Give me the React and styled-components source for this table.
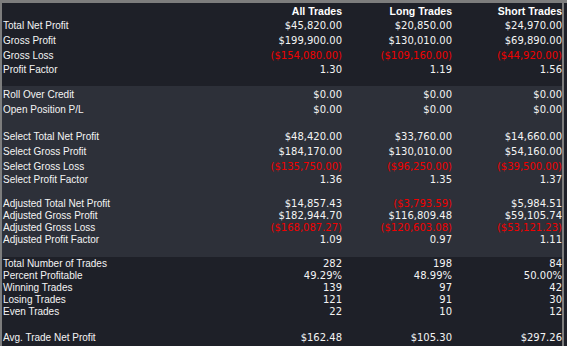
import React from 'react';
import styled, { createGlobalStyle } from 'styled-components';

const GlobalStyle = createGlobalStyle`
  html, body {
    margin: 0;
    padding: 0;
    background: #1e2028;
  }
`;

const columns = ['All Trades', 'Long Trades', 'Short Trades'];

// each section: background tone, padding, and rows (h = row height, gap = spacer)
const sections = [
  {
    tone: 'dark',
    pad: [0, 10],
    rows: [
      { header: true, h: 16 },
      { label: 'Total Net Profit', values: ['$45,820.00', '$20,850.00', '$24,970.00'], h: 14 },
      { label: 'Gross Profit', values: ['$199,900.00', '$130,010.00', '$69,890.00'], h: 15 },
      { label: 'Gross Loss', values: ['($154,080.00)', '($109,160.00)', '($44,920.00)'], h: 15 },
      { label: 'Profit Factor', values: ['1.30', '1.19', '1.56'], h: 13 },
    ],
  },
  {
    tone: 'light',
    pad: [2, 11],
    rows: [
      { label: 'Roll Over Credit', values: ['$0.00', '$0.00', '$0.00'], h: 14 },
      { label: 'Open Position P/L', values: ['$0.00', '$0.00', '$0.00'], h: 15 },
      { gap: 13 },
      { label: 'Select Total Net Profit', values: ['$48,420.00', '$33,760.00', '$14,660.00'], h: 14 },
      { label: 'Select Gross Profit', values: ['$184,170.00', '$130,010.00', '$54,160.00'], h: 15 },
      { label: 'Select Gross Loss', values: ['($135,750.00)', '($96,250.00)', '($39,500.00)'], h: 15 },
      { label: 'Select Profit Factor', values: ['1.36', '1.35', '1.37'], h: 12 },
      { gap: 12 },
      { label: 'Adjusted Total Net Profit', values: ['$14,857.43', '($3,793.59)', '$5,984.51'], h: 12 },
      { label: 'Adjusted Gross Profit', values: ['$182,944.70', '$116,809.48', '$59,105.74'], h: 12 },
      { label: 'Adjusted Gross Loss', values: ['($168,087.27)', '($120,603.08)', '($53,121.23)'], h: 12 },
      { label: 'Adjusted Profit Factor', values: ['1.09', '0.97', '1.11'], h: 12 },
    ],
  },
  {
    tone: 'dark',
    pad: [1, 2],
    rows: [
      { label: 'Total Number of Trades', values: ['282', '198', '84'], h: 12 },
      { label: 'Percent Profitable', values: ['49.29%', '48.99%', '50.00%'], h: 12 },
      { label: 'Winning Trades', values: ['139', '97', '42'], h: 12 },
      { label: 'Losing Trades', values: ['121', '91', '30'], h: 12 },
      { label: 'Even Trades', values: ['22', '10', '12'], h: 12 },
      { gap: 14 },
      { label: 'Avg. Trade Net Profit', values: ['$162.48', '$105.30', '$297.26'], h: 12 },
    ],
  },
];

const App = () => (
  <>
    <GlobalStyle />
    <Frame>
      <Table>
        {sections.map((section, si) => (
          <Section key={si} $tone={section.tone} $top={section.pad[0]} $bottom={section.pad[1]}>
            {section.rows.map((row, ri) => {
              if (row.gap) return <Spacer key={ri} $h={row.gap} />;
              if (row.header) {
                return (
                  <Row key={ri} $h={row.h}>
                    <Label />
                    {columns.map((c) => (
                      <HeaderCell key={c}>{c}</HeaderCell>
                    ))}
                  </Row>
                );
              }
              return (
                <Row key={ri} $h={row.h}>
                  <Label>{row.label}</Label>
                  {row.values.map((v, vi) => (
                    <Value key={vi} $negative={v.startsWith('(')}>
                      {v}
                    </Value>
                  ))}
                </Row>
              );
            })}
          </Section>
        ))}
      </Table>
      <ScrollEdge />
      <Gutter />
    </Frame>
  </>
);

export default App;

const Frame = styled.div`
  display: flex;
  width: 567px;
  height: 346px;
  box-sizing: border-box;
  border-top: 3px solid #7d7d7d;
  border-left: 2px solid #7d7d7d;
  background: #1e2028;
  overflow: hidden;
`;

const Table = styled.div`
  width: 560px;
  display: flex;
  flex-direction: column;
`;

const Section = styled.div`
  background: ${({ $tone }) => ($tone === 'light' ? '#2d3039' : '#1e2028')};
  padding: ${({ $top }) => $top}px 0 ${({ $bottom }) => $bottom}px;
`;

const Row = styled.div`
  display: grid;
  grid-template-columns: 230px 110px 110px 110px;
  height: ${({ $h }) => $h}px;
  line-height: ${({ $h }) => $h}px;
  white-space: nowrap;
`;

const Spacer = styled.div`
  height: ${({ $h }) => $h}px;
`;

const Label = styled.div`
  padding-left: 1px;
  font-family: 'Liberation Sans', Arial, sans-serif;
  font-size: 10px;
  color: #f4f4f4;
`;

const HeaderCell = styled.div`
  text-align: right;
  font-family: 'Liberation Sans', Arial, sans-serif;
  font-size: 10.5px;
  font-weight: bold;
  color: #ffffff;
`;

const Value = styled.div`
  text-align: right;
  font-family: 'DejaVu Sans', Verdana, sans-serif;
  font-size: 10px;
  color: ${({ $negative }) => ($negative ? '#f00000' : '#f4f4f4')};
`;

const ScrollEdge = styled.div`
  width: 2px;
  background: #7d7d7d;
`;

const Gutter = styled.div`
  flex: 1;
  background: #1e2028;
`;
